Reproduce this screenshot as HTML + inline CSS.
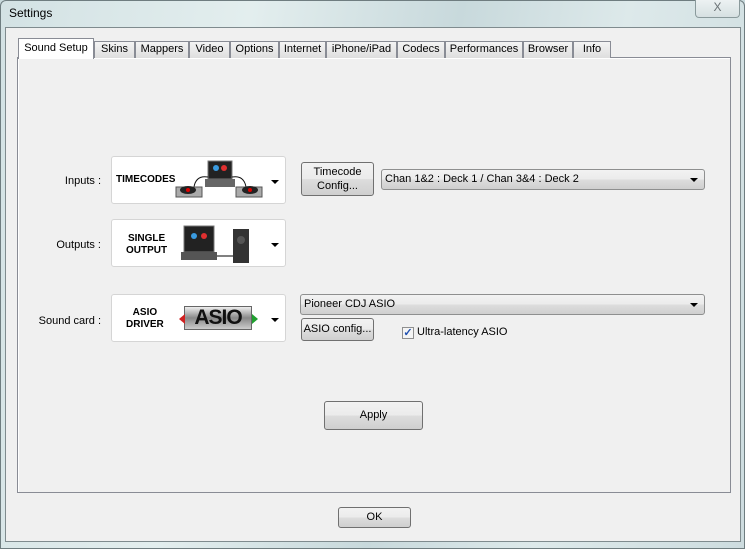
<!DOCTYPE html>
<html><head><meta charset="utf-8"><style>
*{margin:0;padding:0;box-sizing:border-box}
body{width:745px;height:549px;overflow:hidden;font-family:"Liberation Sans",sans-serif;font-size:11px;color:#000;background:#c9dadd;position:relative;white-space:nowrap}
.a{position:absolute}
.frame{left:0;top:0;width:745px;height:549px;background:linear-gradient(100deg,#d3e2e4 0%,#e3eeee 30%,#c8d9dc 55%,#dde9ea 75%,#cddcdf 100%);border:1px solid #6f7d80;border-radius:6px 6px 0 0}
.client{left:5px;top:27px;width:736px;height:515px;background:#f0f0f0;border:1px solid #7f8b8e}
.pane{left:17px;top:57px;width:714px;height:436px;border:1px solid #898c95;background:#f0f0f0;box-shadow:inset 1px 1px 0 #fff}
.tab{top:41px;height:17px;border:1px solid #898c95;border-bottom:none;background:linear-gradient(#f4f4f4,#dedede);text-align:center;line-height:15px;font-size:11px}
.tab.act{top:38px;height:21px;background:#fff;z-index:2;line-height:19px}
.btn{border:1px solid #707070;border-radius:3px;background:linear-gradient(#f2f2f2 0%,#ebebeb 50%,#dddddd 51%,#cfcfcf 100%);text-align:center}
.dd{border:1px solid #8e8f8f;border-radius:3px;background:linear-gradient(#f2f2f2 0%,#ebebeb 50%,#dddddd 51%,#cfcfcf 100%);padding-left:3px;line-height:18px}
.arr{position:absolute;right:6px;top:8px;width:0;height:0;border-left:4px solid transparent;border-right:4px solid transparent;border-top:4px solid #000}
.box{left:111px;width:175px;height:48px;background:#fff;border:1px solid #d5d5d5;border-radius:3px}
.lbl{text-align:right;width:101px;left:0}
.bold{font-weight:bold;font-size:10px;text-align:center;line-height:12px}
</style></head><body>
<div class="a frame"></div>
<div class="a" style="left:9px;top:6px;font-size:12px">Settings</div>
<div class="a" style="left:695px;top:-1px;width:45px;height:19px;border:1px solid #8a9a9c;border-top:none;border-radius:0 0 4px 4px;background:linear-gradient(#eef3f4,#d6e0e2);text-align:center;color:#6a7275;font-size:12px;line-height:17px">X</div>
<div class="a client"></div>
<div class="a pane"></div>
<div class="a tab act" style="left:18px;width:76px">Sound Setup</div>
<div class="a tab" style="left:94px;width:41px">Skins</div>
<div class="a tab" style="left:135px;width:54px">Mappers</div>
<div class="a tab" style="left:189px;width:41px">Video</div>
<div class="a tab" style="left:230px;width:49px">Options</div>
<div class="a tab" style="left:279px;width:47px">Internet</div>
<div class="a tab" style="left:326px;width:71px">iPhone/iPad</div>
<div class="a tab" style="left:397px;width:48px">Codecs</div>
<div class="a tab" style="left:445px;width:78px">Performances</div>
<div class="a tab" style="left:523px;width:50px">Browser</div>
<div class="a tab" style="left:573px;width:38px">Info</div>

<div class="a lbl" style="top:175px">Inputs :</div>
<div class="a lbl" style="top:239px">Outputs :</div>
<div class="a lbl" style="top:315px">Sound card :</div>

<div class="a box" style="top:156px">
  <div class="a bold" style="left:4px;top:17px">TIMECODES</div>
  <svg class="a" style="left:62px;top:2px" width="90" height="42">
    <rect x="34" y="2" width="24" height="18" fill="#222" stroke="#777"/>
    <circle cx="42" cy="9" r="3" fill="#3a9be0"/><circle cx="50" cy="9" r="3" fill="#e03030"/>
    <rect x="31" y="20" width="30" height="8" fill="#666"/>
    <path d="M20 28 Q22 16 34 18 M58 18 Q70 16 72 28" stroke="#111" fill="none"/>
    <rect x="2" y="28" width="26" height="10" fill="#aaa" stroke="#555"/>
    <ellipse cx="14" cy="31" rx="8" ry="4" fill="#222"/><circle cx="14" cy="31" r="2" fill="#d00"/>
    <rect x="62" y="28" width="26" height="10" fill="#aaa" stroke="#555"/>
    <ellipse cx="76" cy="31" rx="8" ry="4" fill="#222"/><circle cx="76" cy="31" r="2" fill="#d00"/>
  </svg>
  <div class="arr" style="top:23px"></div>
</div>
<div class="a box" style="top:219px">
  <div class="a bold" style="left:14px;top:13px">SINGLE<br>OUTPUT</div>
  <svg class="a" style="left:68px;top:4px" width="80" height="42">
    <rect x="4" y="2" width="30" height="26" fill="#222" stroke="#777"/>
    <circle cx="14" cy="12" r="3" fill="#3a9be0"/><circle cx="24" cy="12" r="3" fill="#e03030"/>
    <rect x="1" y="28" width="36" height="8" fill="#555"/>
    <path d="M37 32 H53" stroke="#000"/>
    <rect x="53" y="5" width="16" height="34" fill="#333"/>
    <circle cx="61" cy="16" r="4" fill="#555"/>
  </svg>
  <div class="arr" style="top:23px"></div>
</div>
<div class="a box" style="top:294px">
  <div class="a bold" style="left:14px;top:12px">ASIO<br>DRIVER</div>
  <div class="a" style="left:72px;top:11px;width:68px;height:24px;background:linear-gradient(#eee,#888 50%,#ccc);border:1px solid #666;font:bold 21px 'Liberation Sans',sans-serif;color:#111;text-align:center;line-height:22px;letter-spacing:-1px">ASIO</div>
  <div class="a" style="left:67px;top:19px;border-right:6px solid #d02020;border-top:5px solid transparent;border-bottom:5px solid transparent"></div>
  <div class="a" style="left:140px;top:19px;border-left:6px solid #20a030;border-top:5px solid transparent;border-bottom:5px solid transparent"></div>
  <div class="arr" style="top:23px"></div>
</div>

<div class="a btn" style="left:301px;top:162px;width:73px;height:34px;line-height:14px;padding-top:2px">Timecode<br>Config...</div>
<div class="a dd" style="left:381px;top:169px;width:324px;height:21px">Chan 1&amp;2 : Deck 1 / Chan 3&amp;4 : Deck 2<div class="arr"></div></div>
<div class="a dd" style="left:300px;top:294px;width:405px;height:21px">Pioneer CDJ ASIO<div class="arr"></div></div>
<div class="a btn" style="left:301px;top:318px;width:73px;height:23px;line-height:21px">ASIO config...</div>
<div class="a" style="left:402px;top:327px;width:12px;height:12px;border:1px solid #8f8f8f;background:#f4f4f4;color:#2050b0;font-size:11px;line-height:10px;text-align:center;font-weight:bold">✓</div>
<div class="a" style="left:417px;top:326px">Ultra-latency ASIO</div>

<div class="a btn" style="left:324px;top:401px;width:99px;height:29px;line-height:27px">Apply</div>
<div class="a btn" style="left:338px;top:507px;width:73px;height:21px;line-height:19px">OK</div>
</body></html>
